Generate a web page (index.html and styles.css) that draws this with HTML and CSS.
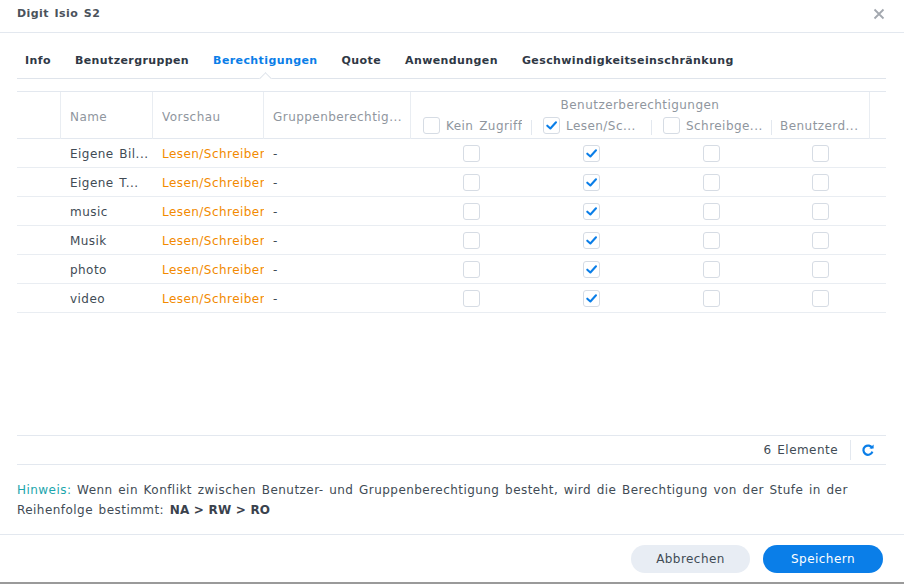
FILE: index.html
```html
<!DOCTYPE html>
<html lang="de">
<head>
<meta charset="utf-8">
<title>Digit Isio S2</title>
<link rel="stylesheet" href="styles.css">
</head>
<body>
<div class="dialog">
  <div class="titlebar">
    <span class="title">Digit Isio S2</span>
    <svg class="close" width="12" height="12" viewBox="0 0 12 12"><path d="M1.5 1.5 L10.5 10.5 M10.5 1.5 L1.5 10.5" stroke="#a3a8af" stroke-width="1.8" fill="none"/></svg>
  </div>
  <div class="content">
    <nav class="tabs">
      <span class="tab">Info</span>
      <span class="tab">Benutzergruppen</span>
      <span class="tab active">Berechtigungen</span>
      <span class="tab">Quote</span>
      <span class="tab">Anwendungen</span>
      <span class="tab">Geschwindigkeitseinschränkung</span>
    </nav>

    <div class="grid">
      <div class="ghead">
        <div class="hc c0"></div>
        <div class="hc c1"><span class="hl">Name</span></div>
        <div class="hc c2"><span class="hl">Vorschau</span></div>
        <div class="hc c3"><span class="hl">Gruppenberechtig...</span></div>
        <div class="hgroup">Benutzerberechtigungen</div>
        <div class="hsub s1"><span class="cb"></span><span class="hl">Kein Zugriff</span></div>
        <div class="hsub s2"><span class="cb on"><svg viewBox="0 0 16 16"><path d="M3.5 8.2 L6.8 11.2 L12.8 4.6" stroke="#0a7ee8" stroke-width="2.2" fill="none" stroke-linecap="round" stroke-linejoin="round"/></svg></span><span class="hl">Lesen/Sc...</span></div>
        <div class="hsub s3"><span class="cb"></span><span class="hl">Schreibge...</span></div>
        <div class="hsub s4"><span class="hl">Benutzerd...</span></div>
        <div class="hc cpad"></div>
      </div>

      <div class="gbody">
        <div class="row"><span class="c0"></span><span class="cell c1 name">Eigene Bil...</span><span class="cell c2 prev">Lesen/Schreiben</span><span class="cell c3">-</span><span class="ck"><span class="cb"></span></span><span class="ck"><span class="cb on"><svg viewBox="0 0 16 16"><path d="M3.5 8.2 L6.8 11.2 L12.8 4.6" stroke="#0a7ee8" stroke-width="2.2" fill="none" stroke-linecap="round" stroke-linejoin="round"/></svg></span></span><span class="ck"><span class="cb"></span></span><span class="ck last"><span class="cb"></span></span></div>
        <div class="row"><span class="c0"></span><span class="cell c1 name">Eigene T...</span><span class="cell c2 prev">Lesen/Schreiben</span><span class="cell c3">-</span><span class="ck"><span class="cb"></span></span><span class="ck"><span class="cb on"><svg viewBox="0 0 16 16"><path d="M3.5 8.2 L6.8 11.2 L12.8 4.6" stroke="#0a7ee8" stroke-width="2.2" fill="none" stroke-linecap="round" stroke-linejoin="round"/></svg></span></span><span class="ck"><span class="cb"></span></span><span class="ck last"><span class="cb"></span></span></div>
        <div class="row"><span class="c0"></span><span class="cell c1 name">music</span><span class="cell c2 prev">Lesen/Schreiben</span><span class="cell c3">-</span><span class="ck"><span class="cb"></span></span><span class="ck"><span class="cb on"><svg viewBox="0 0 16 16"><path d="M3.5 8.2 L6.8 11.2 L12.8 4.6" stroke="#0a7ee8" stroke-width="2.2" fill="none" stroke-linecap="round" stroke-linejoin="round"/></svg></span></span><span class="ck"><span class="cb"></span></span><span class="ck last"><span class="cb"></span></span></div>
        <div class="row"><span class="c0"></span><span class="cell c1 name">Musik</span><span class="cell c2 prev">Lesen/Schreiben</span><span class="cell c3">-</span><span class="ck"><span class="cb"></span></span><span class="ck"><span class="cb on"><svg viewBox="0 0 16 16"><path d="M3.5 8.2 L6.8 11.2 L12.8 4.6" stroke="#0a7ee8" stroke-width="2.2" fill="none" stroke-linecap="round" stroke-linejoin="round"/></svg></span></span><span class="ck"><span class="cb"></span></span><span class="ck last"><span class="cb"></span></span></div>
        <div class="row"><span class="c0"></span><span class="cell c1 name">photo</span><span class="cell c2 prev">Lesen/Schreiben</span><span class="cell c3">-</span><span class="ck"><span class="cb"></span></span><span class="ck"><span class="cb on"><svg viewBox="0 0 16 16"><path d="M3.5 8.2 L6.8 11.2 L12.8 4.6" stroke="#0a7ee8" stroke-width="2.2" fill="none" stroke-linecap="round" stroke-linejoin="round"/></svg></span></span><span class="ck"><span class="cb"></span></span><span class="ck last"><span class="cb"></span></span></div>
        <div class="row"><span class="c0"></span><span class="cell c1 name">video</span><span class="cell c2 prev">Lesen/Schreiben</span><span class="cell c3">-</span><span class="ck"><span class="cb"></span></span><span class="ck"><span class="cb on"><svg viewBox="0 0 16 16"><path d="M3.5 8.2 L6.8 11.2 L12.8 4.6" stroke="#0a7ee8" stroke-width="2.2" fill="none" stroke-linecap="round" stroke-linejoin="round"/></svg></span></span><span class="ck"><span class="cb"></span></span><span class="ck last"><span class="cb"></span></span></div>
      </div>

      <div class="gfoot">
        <span class="count">6 Elemente</span>
        <span class="sep"></span>
        <svg class="refresh" width="14" height="14" viewBox="0 0 14 14"><path d="M11.2 5.2 A4.6 4.6 0 1 0 11.4 8.6" stroke="#0a7ee8" stroke-width="2.2" fill="none"/><path d="M8.4 5.6 L12.6 5.6 L12.6 1.4 Z" fill="#0a7ee8"/></svg>
      </div>
    </div>

    <p class="hint"><span class="hint-label">Hinweis:</span> Wenn ein Konflikt zwischen Benutzer- und Gruppenberechtigung besteht, wird die Berechtigung von der Stufe in der Reihenfolge bestimmt: <b>NA &gt; RW &gt; RO</b></p>
  </div>
  <div class="footer">
    <button class="btn cancel">Abbrechen</button>
    <button class="btn save">Speichern</button>
  </div>
</div>
</body>
</html>
```
FILE: styles.css
```css
* { box-sizing: border-box; }
html, body { margin: 0; padding: 0; background: #fff; }
body {
  font-family: "DejaVu Sans", Verdana, sans-serif;
  font-size: 12px;
  color: #414b55;
  letter-spacing: 0.45px;
  word-spacing: 1.5px;
}
.dialog {
  width: 904px;
  height: 584px;
  display: flex;
  flex-direction: column;
  border-bottom: 2px solid #9a9a9a;
}
.titlebar {
  height: 33px;
  flex: none;
  border-bottom: 1px solid #e3e8ef;
  display: flex;
  align-items: center;
  justify-content: space-between;
  padding: 0 19px 6px 17px;
}
.title { font-weight: bold; font-size: 11px; color: #4b525b; letter-spacing: 0.4px; }
.close { display: block; margin-top: 2px; }
.content { flex: 1; padding: 0 18px 0 17px; display: flex; flex-direction: column; }
.tabs {
  height: 46px;
  flex: none;
  display: flex;
  align-items: center;
  gap: 24px;
  padding-left: 8px;
  border-bottom: 1px solid #dfe4eb;
  padding-top: 10px;
}
.tab {
  font-weight: bold;
  font-size: 11px;
  letter-spacing: 0.4px;
  word-spacing: 0;
  color: #2f3845;
  position: relative;
  height: 100%;
  display: flex;
  align-items: center;
}
.tab.active { color: #0a7ee8; }
.tab.active::after {
  content: "";
  position: absolute;
  left: 50%;
  bottom: -5px;
  width: 8px;
  height: 8px;
  margin-left: -4px;
  background: #fff;
  border-top: 1px solid #dfe4eb;
  border-left: 1px solid #dfe4eb;
  transform: rotate(45deg);
}
.grid {
  margin-top: 12px;
  flex: none;
  display: flex;
  flex-direction: column;
  border-top: 1px solid #e3e8ef;
}
.ghead {
  display: grid;
  grid-template-columns: 44px 92px 111px 147px 120px 120px 120px 99px 16px;
  grid-template-rows: 23px 24px;
  border-bottom: 1px solid #e3e8ef;
  height: 47px;
}
.hc {
  grid-row: 1 / span 2;
  border-right: 1px solid #e9edf2;
  display: flex;
  align-items: center;
  padding: 3px 0 0 9px;
  overflow: hidden;
  white-space: nowrap;
}
.hc.cpad { border-right: none; grid-column: 9; }
.hc.c0 { grid-column: 1; }
.hl { color: #8f969e; white-space: nowrap; overflow: hidden; }
.hgroup {
  grid-column: 5 / span 4;
  grid-row: 1;
  text-align: center;
  color: #8f969e;
  padding-top: 6px;
  border-right: 1px solid #e9edf2;
}
.hsub {
  grid-row: 2;
  display: flex;
  align-items: center;
  gap: 6px;
  padding: 0 0 3px 12px;
  position: relative;
  overflow: hidden;
}
.hsub.s4 { padding-left: 9px; border-right: 1px solid #e9edf2; }
.hsub + .hsub::before {
  content: "";
  position: absolute;
  left: 0;
  top: 5px;
  height: 15px;
  border-left: 1px solid #e3e8ef;
}
.cb {
  width: 17px;
  height: 17px;
  flex: none;
  border: 1px solid #d6dce4;
  border-radius: 3px;
  background: #fff;
  display: inline-block;
}
.cb svg { width: 15px; height: 15px; display: block; }
.gbody { height: 296px; }
.row {
  display: grid;
  grid-template-columns: 44px 92px 111px 147px 120px 120px 120px 99px 16px;
  height: 29px;
  border-bottom: 1px solid #e9edf2;
  align-items: center;
  padding-top: 1px;
}
.cell {
  padding-left: 9px;
  white-space: nowrap;
  overflow: hidden;
  color: #414b55;
}
.cell.c1 { padding-right: 2px; }
.prev { color: #f28a00; text-overflow: clip; }
.ck { display: flex; justify-content: center; margin-top: -1px; }
.gfoot {
  height: 30px;
  border-top: 1px solid #e3e8ef;
  border-bottom: 1px solid #e3e8ef;
  display: flex;
  align-items: center;
  justify-content: flex-end;
  padding-right: 11px;
}
.count { color: #414b55; }
.sep { width: 1px; height: 20px; background: #e3e8ef; margin: 0 10px 0 12px; }
.refresh { display: block; }
.hint {
  margin: 15px 0 0 0;
  line-height: 20px;
  color: #414b55;
  word-spacing: 1.4px;
}
.hint-label { color: #1ca6ad; }
.hint b { color: #3a424d; word-spacing: 0; letter-spacing: 0.2px; }
.footer {
  margin-top: auto;
  height: 48px;
  flex: none;
  border-top: 1px solid #e3e8ef;
  display: flex;
  align-items: center;
  justify-content: flex-end;
  gap: 13px;
  padding: 0 21px 0 0;
}
.btn {
  font-family: "DejaVu Sans", Verdana, sans-serif;
  font-size: 12px;
  letter-spacing: 0.45px;
  height: 28px;
  border: none;
  border-radius: 14px;
  padding: 0;
  width: 119px;
}
.cancel { background: #e8edf4; color: #414b55; }
.save { background: #0a7ee8; color: #fff; width: 120px; }
```
